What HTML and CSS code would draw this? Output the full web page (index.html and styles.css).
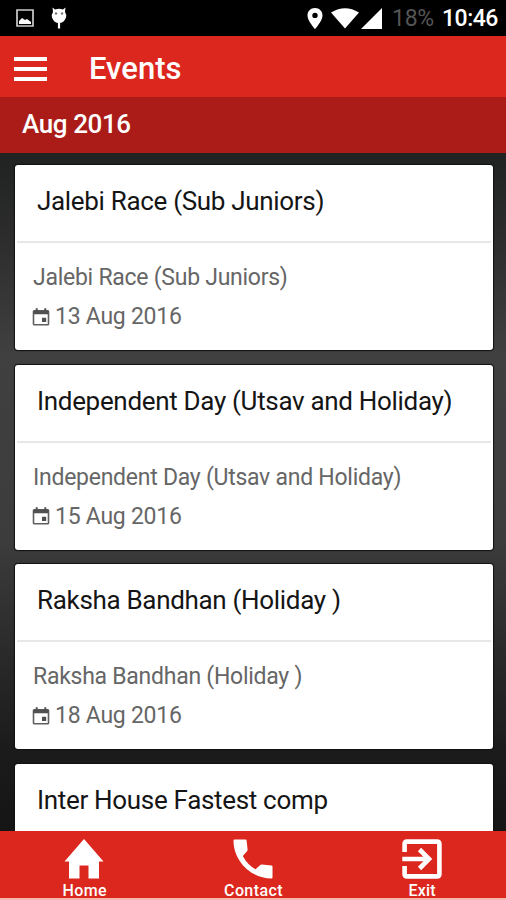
FILE: index.html
```html
<!DOCTYPE html>
<html lang="en">
<head>
<meta charset="utf-8">
<title>Events</title>
<link rel="stylesheet" href="styles.css">
</head>
<body>
<div class="screen">
  <div class="status">
    <div class="status-left">
      <svg width="18" height="18" viewBox="0 0 18 18"><path d="M1 1h16v16H1z" fill="none" stroke="#ccc" stroke-width="1.7"/><path d="M3 15v-3l3-3 3 2 2-1 4 3v2z" fill="#fff"/></svg>
      <svg width="16" height="23" viewBox="0 0 16 23"><path d="M1.500.5 4 2.500Q8 1 12 2.500L14.500.5 14 5Q16 8 15 10.500 13 16 8 16 3 16 1 10.500 0 8 2 5z" fill="#fff"/><path d="M8 15v6.500" stroke="#fff" stroke-width="2.200"/><circle cx="5" cy="6.500" r="1.200" fill="#777"/><circle cx="11" cy="6.500" r="1.200" fill="#777"/></svg>
    </div>
    <div class="status-right">
      <svg class="pin" width="16" height="21" viewBox="0 0 16 21"><path fill="#fff" fill-rule="evenodd" d="M8 0C3.500 0 .5 3.300.5 7.500.5 13 8 21 8 21s7.500-8 7.500-13.500C15.500 3.300 12.500 0 8 0zm0 4.700a2.700 2.700 0 1 1 0 5.400 2.700 2.700 0 0 1 0-5.400z"/></svg>
      <svg class="wifi" width="28" height="21" viewBox="0 0 28 21"><path fill="#fff" d="M0 4.500Q14-4 28 4.500L14 20.500z"/></svg>
      <svg class="cell" width="21" height="21" viewBox="0 0 21 21"><path fill="#fff" d="M21 0v21H0z"/></svg>
      <span class="battery">18%</span>
      <span class="clock">10:46</span>
    </div>
  </div>
  <header class="appbar">
    <div class="menu"><i></i><i></i><i></i></div>
    <h1>Events</h1>
  </header>
  <div class="month">Aug 2016</div>
  <main class="list">
    <article class="card">
      <h2>Jalebi Race (Sub Juniors)</h2>
      <div class="body">
        <p>Jalebi Race (Sub Juniors)</p>
        <p class="date"><svg viewBox="0 0 18 18"><use href="#cal"/></svg><span>13 Aug 2016</span></p>
      </div>
    </article>
    <article class="card">
      <h2>Independent Day (Utsav and Holiday)</h2>
      <div class="body">
        <p>Independent Day (Utsav and Holiday)</p>
        <p class="date"><svg viewBox="0 0 18 18"><use href="#cal"/></svg><span>15 Aug 2016</span></p>
      </div>
    </article>
    <article class="card">
      <h2>Raksha Bandhan (Holiday )</h2>
      <div class="body">
        <p>Raksha Bandhan (Holiday )</p>
        <p class="date"><svg viewBox="0 0 18 18"><use href="#cal"/></svg><span>18 Aug 2016</span></p>
      </div>
    </article>
    <article class="card last">
      <h2>Inter House Fastest comp</h2>
    </article>
  </main>
  <nav class="tabs">
    <a><svg viewBox="0 0 40 40"><path fill="#fff" d="M20 0 39.500 22.500H35V39.500H24.500V26.500H15.500V39.500H5V22.500H.5z"/></svg><span>Home</span></a>
    <a><svg viewBox="0 0 40 40"><path fill="#fff" d="M1.500.5H12.500Q13.500 .5 13.600 1.500L14.600 10.500Q14.700 11.600 14 12.300L9.800 17C13 23 17 27 22.500 30.200L27.300 26Q28 25.300 29 25.400L38.500 26.400Q39.500 26.500 39.500 27.500V38.500Q39.500 39.500 38.500 39.500C18 39.500.5 22 .5 1.500Q.5.5 1.500.5z"/></svg><span>Contact</span></a>
    <a><svg viewBox="0 0 40 40"><g fill="none" stroke="#fff" stroke-width="4.600"><path d="M2.600 13V5Q2.600 2.600 5 2.600H35Q37.400 2.600 37.400 5V35Q37.400 37.400 35 37.400H5Q2.600 37.400 2.600 35V27M.3 20H27M17.500 10.500 27 20 17.500 29.500"/></g></svg><span class="exit">Exit</span></a>
  </nav>
</div>
<svg class="defs" width="0" height="0"><defs><g id="cal"><path d="M1.500 3.500Q1.500 2.800 2.300 2.800H15.700Q16.500 2.800 16.500 3.500V16Q16.500 16.800 15.700 16.800H2.300Q1.500 16.800 1.500 16z" fill="none" stroke="#606060" stroke-width="1.600"/><path d="M1.500 2.500h15v3.700h-15zM3.700.3h2v3h-2zM12.300.3h2v3h-2zM10 9.800h4.200V14H10z" fill="#505050"/></g></defs></svg>
</body>
</html>
```

FILE: styles.css
```css
* { box-sizing: border-box; }
body { margin: 0; font-family: Roboto, "Liberation Sans", sans-serif; }
h1, h2, p { margin: 0; font-weight: 400; white-space: nowrap; }
svg { display: block; flex: none; }
.defs { position: absolute; }
.screen { width: 506px; height: 900px; display: flex; flex-direction: column; overflow: hidden; background: #fff; }

.status { flex: none; height: 36px; background: #000; display: flex; justify-content: space-between; padding: 0 8px 0 16px; }
.status-left { display: flex; gap: 17px; padding-top: 9px; }
.status-left svg:last-child { margin-top: -2px; }
.status-right { display: flex; line-height: 36px; font-size: 23px; padding-top: 1px; }
.status-right svg { margin-top: 7px; }
.pin { margin-left: -1px; }
.wifi { margin-left: 8px; }
.cell { margin-left: 2px; }
.battery { color: #555; width: 42px; margin-left: 10px; letter-spacing: -0.3px; }
.clock { color: #fff; font-weight: 500; width: 56px; margin-left: 8px; letter-spacing: -0.5px; }

.appbar { flex: none; height: 61px; background: #dc271e; display: flex; align-items: center; padding-left: 14px; color: #fff; }
.menu { width: 33px; display: grid; gap: 6px; padding-top: 4px; }
.menu i { height: 4px; background: #fff; }
.appbar h1 { margin-left: 42px; font-size: 31px; font-weight: 500; line-height: 61px; padding-top: 4px; }
.month { flex: none; height: 56px; background: #ab1c18; color: #fff; padding-left: 22px; font-size: 26px; line-height: 54px; font-weight: 500; letter-spacing: -0.4px; }

.list { flex: 1; min-height: 0; overflow: hidden; padding: 12px 13px 0 15px; display: flex; flex-direction: column; gap: 14.6px;
  background: linear-gradient(#202322 0, #2c2c2c 12%, #404040 30%, #3c3c3c 57%, #1b1b1b 88%, #151515 100%); }
.card { flex: none; height: 185px; background: #fff; border-radius: 3px; box-shadow: 0 0 1px 1px #111; }
.card h2 { height: 76px; margin: 0 2px; padding-left: 20px; font-size: 26px; line-height: 72px; color: #151515; letter-spacing: -0.32px; }
.body { margin: 0 2px; padding: 15px 0 0 16px; border-top: 2px solid #e7e7e7; }
.body p { height: 40px; line-height: 40px; font-size: 23px; color: #666; letter-spacing: -0.26px; }
.body .date { height: 38px; line-height: 38px; display: flex; align-items: center; gap: 5px; }
.date svg { width: 18px; height: 18px; margin: -1px 0 0 -1px; }

.tabs { flex: none; height: 69px; background: #dc271e; border-bottom: 2px solid #f6b5b1; display: grid; grid-template-columns: repeat(3, 1fr); padding-top: 8px; }
.tabs a { display: flex; flex-direction: column; align-items: center; color: #fff; font-size: 16px; font-weight: 500; line-height: 24px; letter-spacing: 0.4px; }
.tabs span { padding-left: 1px; }
.tabs .exit { letter-spacing: 0.2px; }
.tabs svg { width: 40px; height: 40px; }
```
